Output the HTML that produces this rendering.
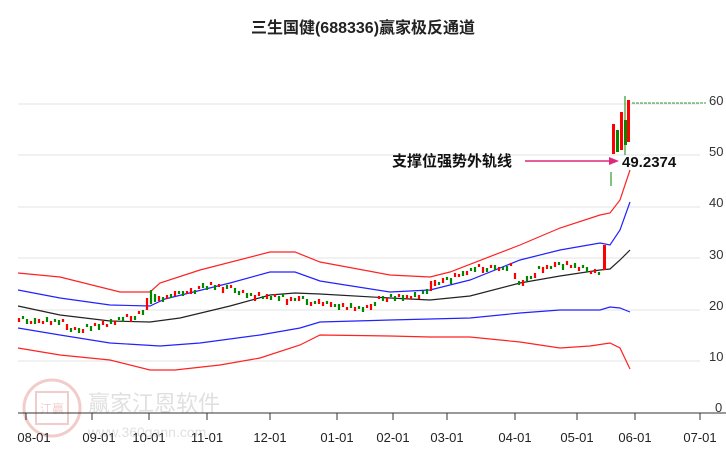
<!DOCTYPE html>
<html><head><meta charset="utf-8"><style>
body{margin:0;width:726px;height:450px;background:#fff;overflow:hidden;font-family:"Liberation Sans","Noto Sans CJK SC",sans-serif}
</style></head><body>
<svg width="726" height="450" xmlns="http://www.w3.org/2000/svg" font-family="Liberation Sans, Noto Sans CJK SC, sans-serif">
<text x="363" y="33" text-anchor="middle" font-size="16" font-weight="bold" fill="#222">三生国健(688336)赢家极反通道</text>
<g stroke="#e3e3e3" stroke-width="1">
<line x1="18" y1="104" x2="700" y2="104"/><line x1="18" y1="155" x2="700" y2="155"/><line x1="18" y1="207" x2="700" y2="207"/><line x1="18" y1="258" x2="700" y2="258"/><line x1="18" y1="310" x2="700" y2="310"/><line x1="18" y1="361" x2="700" y2="361"/>
</g>
<g font-size="13" fill="#333">
<text x="709" y="105">60</text><text x="709" y="156">50</text><text x="709" y="207">40</text><text x="709" y="259">30</text><text x="709" y="310">20</text><text x="709" y="361">10</text><text x="715" y="412">0</text>
</g>
<g opacity="0.25">
<circle cx="52" cy="408" r="28" fill="none" stroke="#c33" stroke-width="3"/>
<rect x="36" y="392" width="32" height="32" fill="none" stroke="#c33" stroke-width="2"/>
<text x="52" y="413" text-anchor="middle" font-size="12" fill="#c33">江赢</text>
<text x="88" y="411" font-size="22" fill="#888">赢家江恩软件</text>
<text x="88" y="437" font-size="14" fill="#888">www.360gann.com</text>
</g>
<line x1="18" y1="413" x2="726" y2="413" stroke="#333" stroke-width="1"/>
<path stroke="#333" stroke-width="1" d="M26,413v7M92,413v7M149,413v7M207,413v7M270,413v7M337,413v7M393,413v7M447,413v7M515,413v7M577,413v7M635,413v7M700,413v7"/>
<g font-size="13" fill="#222" text-anchor="middle">
<text x="34" y="442">08-01</text><text x="99" y="442">09-01</text><text x="149" y="442">10-01</text><text x="207" y="442">11-01</text><text x="270" y="442">12-01</text><text x="337" y="442">01-01</text><text x="393" y="442">02-01</text><text x="447" y="442">03-01</text><text x="515" y="442">04-01</text><text x="577" y="442">05-01</text><text x="635" y="442">06-01</text><text x="700" y="442">07-01</text>
</g>
<g fill="none" stroke-width="1.2">
<polyline stroke="#f22" points="18,273 60,277 120,292 150,292 160,283 200,270 270,252 295,252 320,262 390,275 430,277 450,272 520,245 560,228 600,215 610,213 620,200 630,170"/>
<polyline stroke="#22f" points="18,290 60,298 110,305 150,306 165,299 230,283 270,272 295,272 320,281 390,292 430,290 470,280 520,260 560,250 600,243 610,245 620,230 630,202"/>
<polyline stroke="#222" points="18,306 60,315 110,321 150,322 180,318 230,306 270,295 295,293 320,294 390,298 430,300 470,296 520,283 560,276 600,270 610,269 620,260 630,250"/>
<polyline stroke="#22f" points="18,328 60,335 110,343 160,346 200,343 260,335 300,328 320,322 390,320 430,319 470,318 520,313 560,310 600,310 610,307 620,308 630,312"/>
<polyline stroke="#f22" points="18,348 60,355 110,360 150,370 175,370 220,365 260,358 300,345 320,335 390,336 430,337 470,337 520,342 560,348 590,346 610,343 620,348 630,369"/>
</g>
<path fill="none" stroke="#f00" stroke-width="2.2" d="M19,318v4M31,321v3M39,319v4M43,321v3M51,321v4M63,319v3M67,324v6M75,327v3M83,329v4M95,323v3M103,321v4M107,324v3M115,321v4M127,314v3M131,316v6M139,311v3M147,298v12M159,296v5M167,295v4M175,291v5M187,291v3M191,288v6M199,286v3M211,282v3M219,284v3M223,287v6M231,285v3M243,290v3M255,295v6M259,292v4M267,294v5M275,294v3M287,299v6M291,297v4M299,296v5M311,302v4M319,299v5M323,302v4M331,302v5M343,303v4M347,307v3M355,307v4M367,305v3M371,304v6M379,296v3M387,298v4M399,294v3M407,295v4M411,296v3M419,295v4M431,281v10M435,280v6M443,278v5M455,273v4M459,274v3M467,271v4M479,264v3M483,267v6M491,265v3M499,267v4M511,263v3M515,273v6M523,280v6M535,273v5M543,267v6M547,265v4M555,262v5M567,261v4M571,265v3M579,267v4M591,271v3M595,269v4"/>
<path fill="none" stroke="#080" stroke-width="2.2" d="M23,316v3M27,319v5M35,318v6M47,317v5M55,319v3M59,320v5M71,328v4M79,328v5M87,324v3M91,326v5M99,324v6M111,319v5M119,317v3M123,317v5M135,316v4M143,310v5M151,290v14M155,294v8M163,297v5M171,294v4M179,291v3M183,291v5M195,290v4M203,283v5M207,286v4M215,285v5M227,285v4M235,288v5M239,291v4M247,293v5M251,293v3M263,296v3M271,296v4M279,296v5M283,294v3M295,298v3M303,296v3M307,299v6M315,301v3M327,301v3M335,304v3M339,304v6M351,303v5M359,306v3M363,307v5M375,302v4M383,296v5M391,294v3M395,296v5M403,295v6M415,292v5M423,291v3M427,289v5M439,282v3M447,277v3M451,278v6M463,271v5M471,268v3M475,267v5M487,268v4M495,265v5M503,267v3M507,266v5M519,281v4M527,276v5M531,276v3M539,266v3M551,266v3M559,262v3M563,264v6M575,263v5M583,265v3M587,267v5M599,272v3"/>
<line x1="632" y1="103" x2="706" y2="103" stroke="#393" stroke-dasharray="3,1"/>
<rect x="603" y="245" width="3" height="25" fill="#f00"/>
<line x1="611" y1="172" x2="611" y2="186" stroke="#080"/>
<rect x="612" y="124" width="3" height="30" fill="#f00"/>
<rect x="616" y="130" width="3" height="22" fill="#080"/>
<rect x="620" y="112" width="3" height="38" fill="#f00"/>
<rect x="624" y="120" width="3" height="25" fill="#080"/>
<line x1="625" y1="96" x2="625" y2="155" stroke="#080"/>
<rect x="627" y="100" width="3" height="42" fill="#f00"/>
<text x="392" y="166" font-size="15" font-weight="bold" fill="#111">支撑位强势外轨线</text>
<line x1="525" y1="161" x2="612" y2="161" stroke="#e0287a" stroke-width="1.5"/>
<polygon points="619,161 609,157 609,165" fill="#e0287a"/>
<text x="622" y="167" font-size="15" font-weight="bold" fill="#111">49.2374</text>
</svg>
</body></html>
